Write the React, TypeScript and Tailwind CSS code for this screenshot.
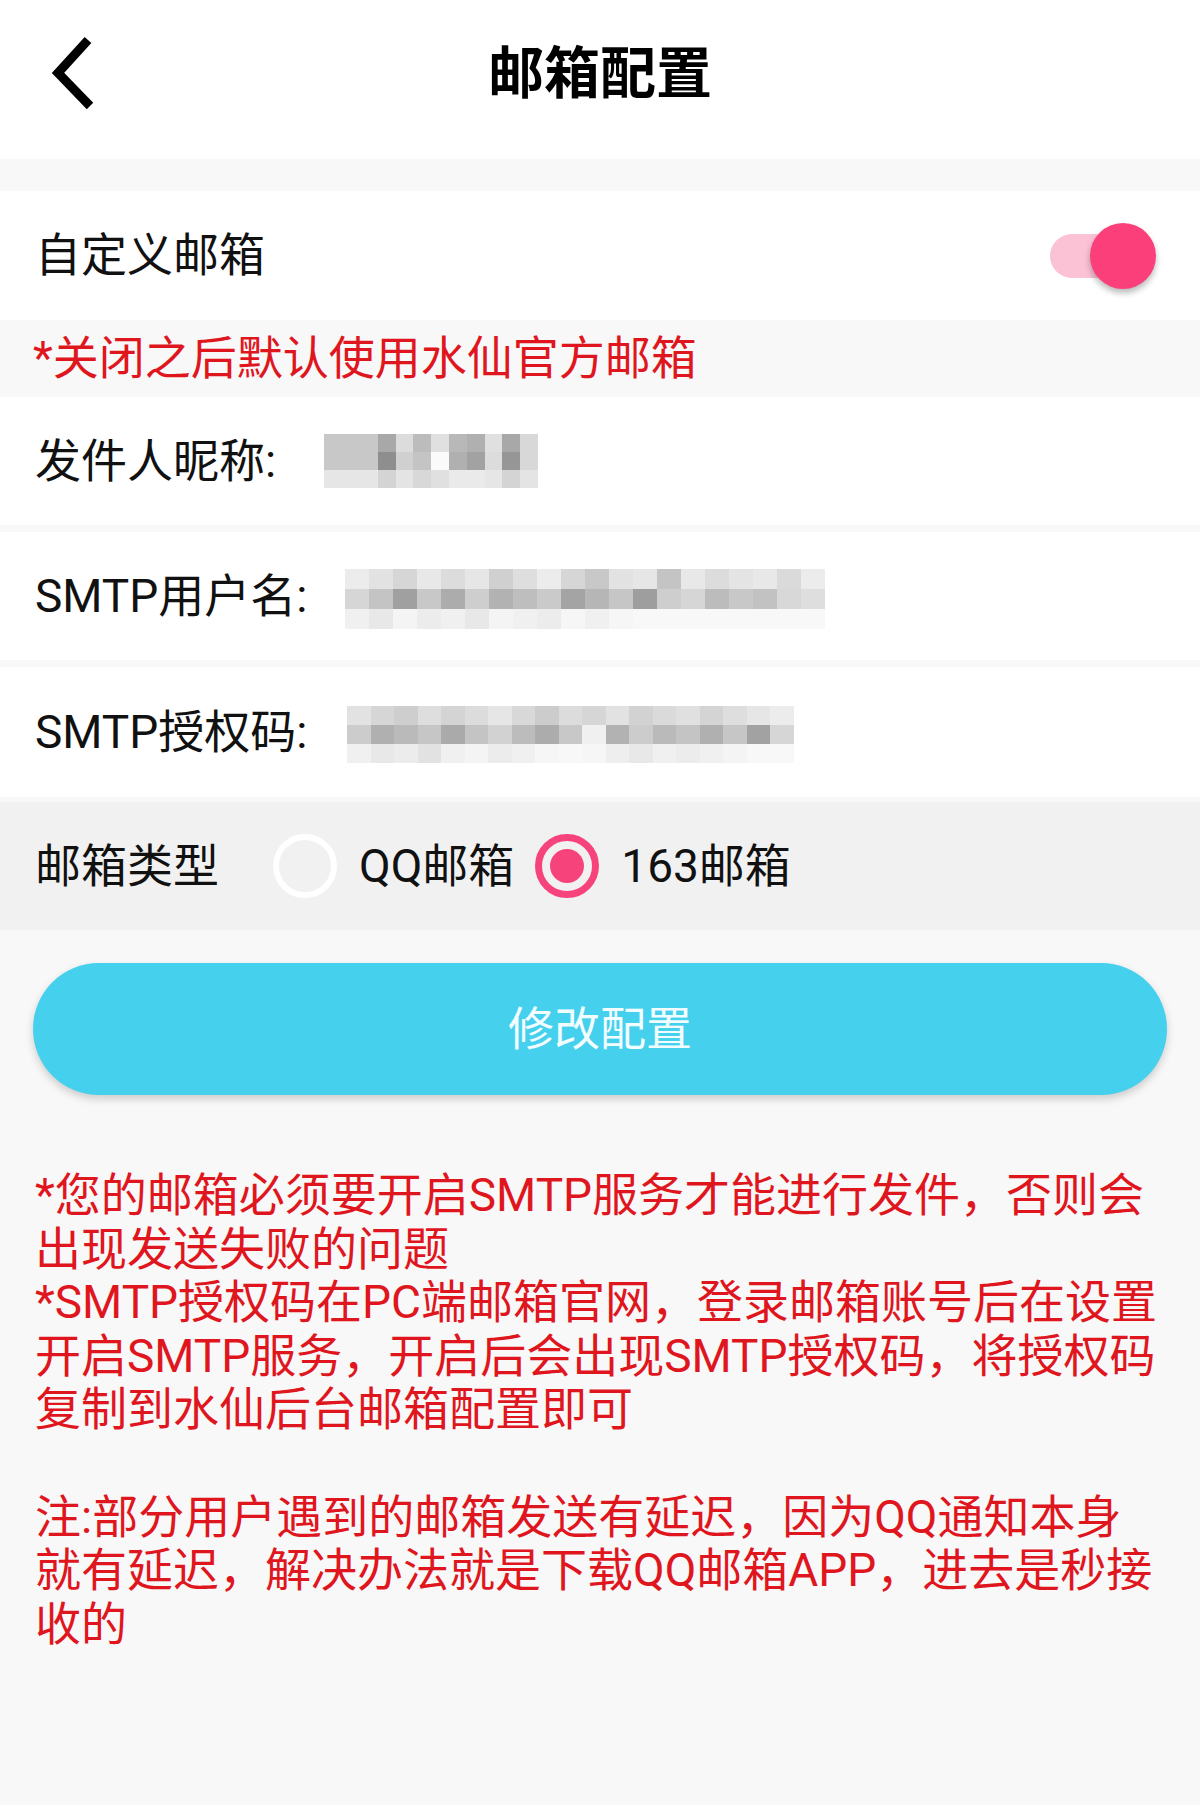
import React from "react";

type MosaicProps = { cols: number[]; rows: string[][]; rowH: number };

// pixelated placeholder for the blurred values in the screenshot
function Mosaic({ cols, rows, rowH }: MosaicProps) {
    return (
        <div className="flex flex-col blur-[0.6px]">
            {rows.map((row, r) => (
                <div key={r} className="flex">
                    {row.map((c, i) => (
                        <div key={i} style={{ width: cols[i], height: rowH, backgroundColor: c }} />
                    ))}
                </div>
            ))}
        </div>
    );
}

const g = (v: number) => `rgb(${v},${v},${v})`;
const grays = (vals: number[]) => vals.map(g);

const nickCols = [54, 18, 17, 18, 18, 18, 18, 17, 18, 18];
const nickRows = [
    grays([200, 168, 220, 188, 224, 184, 176, 224, 168, 216]),
    grays([200, 142, 208, 196, 250, 176, 162, 220, 150, 216]),
    grays([230, 212, 228, 216, 224, 234, 234, 230, 212, 228]),
];

const userCols = Array(20).fill(24);
const userRows = [
    grays([236, 226, 214, 232, 220, 230, 208, 222, 236, 214, 200, 226, 230, 196, 232, 220, 228, 232, 218, 236]),
    grays([214, 196, 160, 200, 172, 206, 178, 190, 202, 164, 182, 198, 158, 206, 214, 188, 200, 194, 216, 222]),
    grays([240, 232, 244, 236, 240, 232, 244, 240, 236, 246, 240, 246, 248, 248, 248, 248, 248, 248, 248, 248]),
];

const authCols = Array(19).fill(23.5);
const authRows = [
    grays([226, 214, 206, 222, 212, 220, 230, 216, 204, 220, 214, 226, 210, 218, 224, 212, 222, 230, 236]),
    grays([204, 176, 186, 198, 170, 196, 210, 188, 172, 200, 240, 178, 204, 186, 196, 176, 198, 162, 214]),
    grays([240, 232, 236, 226, 240, 244, 236, 240, 246, 248, 246, 238, 232, 240, 236, 240, 244, 248, 248]),
];

function Toggle() {
    return (
        <div className="relative w-[106px] h-[66px]">
            <div className="absolute left-0 top-[11px] w-[86px] h-[44px] rounded-full bg-[#fbc1d5]" />
            <div className="absolute right-0 top-0 w-[66px] h-[66px] rounded-full bg-[#fb3f7b] shadow-[0_4px_6px_rgba(0,0,0,0.28)]" />
        </div>
    );
}

function FieldRow({ label, h, children }: { label: string; h: string; children: React.ReactNode }) {
    return (
        <div className={`${h} bg-white flex items-center pl-[35px]`}>
            <span className="text-[46px] text-[#111]">{label}</span>
            {children}
        </div>
    );
}

export default function App() {
    return (
        <div className="min-h-[1805px] bg-[#f8f8f8] font-[Roboto,'Noto_Sans_CJK_SC',sans-serif]">
            <header className="h-[159px] pb-[12px] bg-white grid grid-cols-[1fr_auto_1fr] items-center">
                <button className="pl-[50px] justify-self-start">
                    <svg width="48" height="76" viewBox="0 0 48 76">
                        <polyline points="38,4 8,37 40,70" fill="none" stroke="#000" strokeWidth="9" strokeLinejoin="miter" />
                    </svg>
                </button>
                <h1 className="text-[56px] font-bold text-black">邮箱配置</h1>
                <div />
            </header>

            <div className="h-[32px]" />

            <div className="h-[129px] bg-white flex items-center justify-between pl-[35px] pr-[44px]">
                <span className="text-[46px] text-[#111]">自定义邮箱</span>
                <Toggle />
            </div>

            <div className="h-[77px] flex items-center pl-[33px] text-[46px] text-[#e0161e]">
                *关闭之后默认使用水仙官方邮箱
            </div>

            <div className="flex flex-col gap-[7px]">
                <FieldRow label="发件人昵称:" h="h-[128px]">
                    <div className="ml-[48px]">
                        <Mosaic cols={nickCols} rows={nickRows} rowH={18} />
                    </div>
                </FieldRow>
                <FieldRow label="SMTP用户名:" h="h-[128px]">
                    <div className="ml-[38px] mt-[6px]">
                        <Mosaic cols={userCols} rows={userRows} rowH={20} />
                    </div>
                </FieldRow>
                <FieldRow label="SMTP授权码:" h="h-[130px]">
                    <div className="ml-[40px] mt-[4px]">
                        <Mosaic cols={authCols} rows={authRows} rowH={19} />
                    </div>
                </FieldRow>
            </div>

            <div className="mt-[5px] h-[128px] bg-[#f1f1f1] flex items-center pl-[35px] text-[46px] text-[#111]">
                <span>邮箱类型</span>
                <div className="ml-[54px] w-[64px] h-[64px] rounded-full border-[6px] border-white" />
                <span className="ml-[22px]">QQ邮箱</span>
                <div className="ml-[21px] w-[64px] h-[64px] rounded-full border-[7px] border-[#f7437c] flex items-center justify-center">
                    <div className="w-[34px] h-[34px] rounded-full bg-[#f7437c]" />
                </div>
                <span className="ml-[22px]">163邮箱</span>
            </div>

            <button className="mt-[33px] mx-[33px] w-[1134px] h-[132px] rounded-full bg-[#45d0ee] text-[46px] text-[#f2fdff] shadow-[0_4px_8px_rgba(0,0,0,0.18)]">
                修改配置
            </button>

            <div className="mt-[74px] pl-[35px] pr-[40px] text-[46px] leading-[53.6px] text-[#e0161e]">
                <p>*您的邮箱必须要开启SMTP服务才能进行发件，否则会出现发送失败的问题</p>
                <p>*SMTP授权码在PC端邮箱官网，登录邮箱账号后在设置开启SMTP服务，开启后会出现SMTP授权码，将授权码复制到水仙后台邮箱配置即可</p>
                <p>&nbsp;</p>
                <p>注:部分用户遇到的邮箱发送有延迟，因为QQ通知本身就有延迟，解决办法就是下载QQ邮箱APP，进去是秒接收的</p>
            </div>
        </div>
    );
}
